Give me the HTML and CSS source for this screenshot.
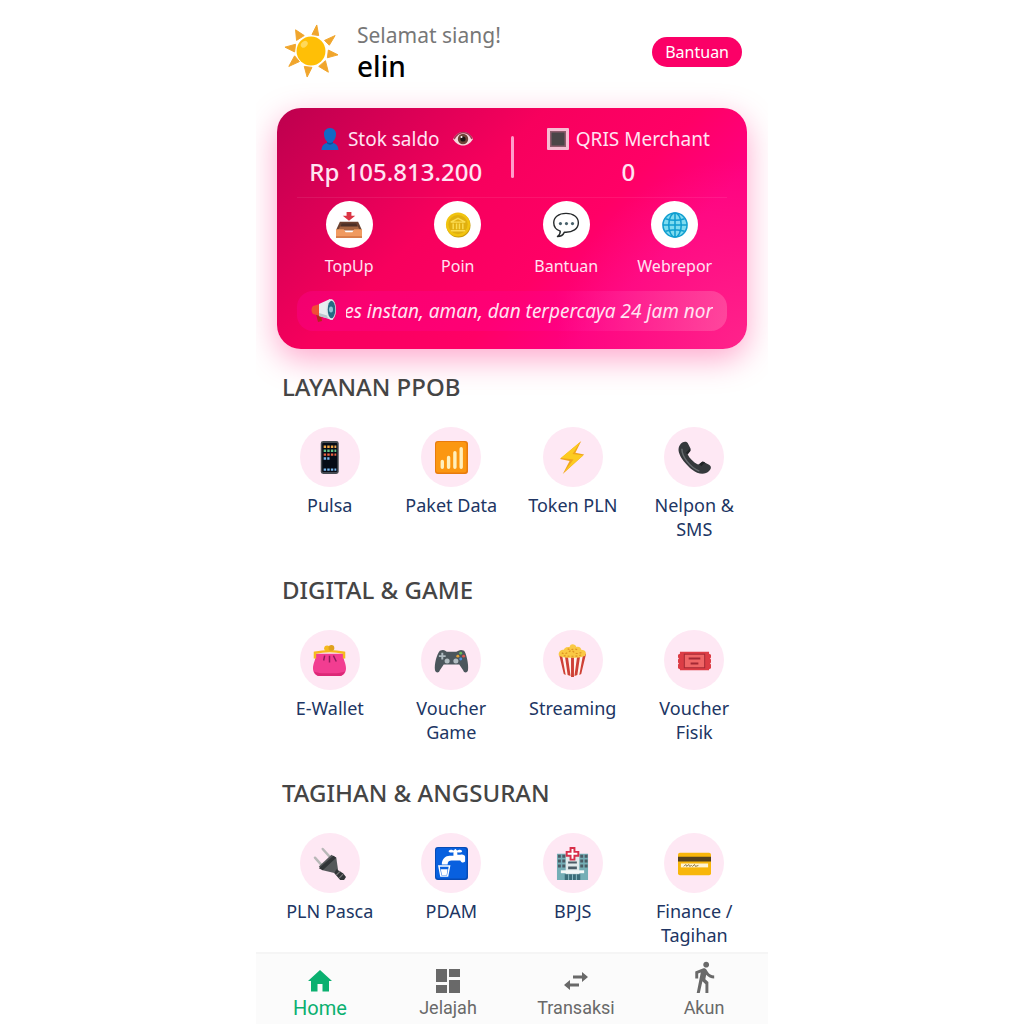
FILE: index.html
```html
<!DOCTYPE html>
<html lang="id">
<head>
<meta charset="UTF-8" />
<meta name="viewport" content="width=device-width, initial-scale=1" />
<title>Home</title>
<link rel="stylesheet" href="styles.css">
</head>
<body>
<div class="app">

<header class="top">
  <svg class="sun" viewBox="0 0 56 56" aria-hidden="true">
    <g fill="#f0a52c" stroke="#f0a52c" stroke-linejoin="round">
      <path d="M29 11 L34 1 L36 12 Z"/>
      <path d="M42 17 L53 12 L47 22 Z"/>
      <path d="M46 27 L56 32 L45 35 Z"/>
      <path d="M43 38 L46 50 L36 44 Z"/>
      <path d="M29 45 L24 55 L21 44 Z"/>
      <path d="M16 39 L5 44 L11 33 Z"/>
      <path d="M11 29 L1 24 L12 21 Z"/>
      <path d="M13 17 L12 6 L21 12 Z"/>
    </g>
    <circle cx="28" cy="28" r="15" fill="#ffbf06"/>
    <ellipse cx="21" cy="21" rx="4" ry="3" fill="#ffd95a" transform="rotate(-45 21 21)"/>
  </svg>
  <div class="greeting">
    <p class="hello">Selamat siang!</p>
    <h1>elin</h1>
  </div>
  <button class="help-btn">Bantuan</button>
</header>

<section class="card">
  <div class="balances">
    <div class="balance">
      <p class="balance-title">
        <svg class="mini" viewBox="0 0 22 22" aria-hidden="true"><path fill="#1269c4" d="M11 0c4 0 6.300 3 6 6.500c-.2 3.500-1.500 5.500-3 7v1.500c3 .8 5 2 5.500 7H2.500c.5-5 2.500-6.200 5.500-7v-1.500c-1.500-1.500-2.800-3.500-3-7C4.700 3 7 0 11 0z"/><path fill="#0b4f9c" d="M8 14c2 1.300 4 1.300 6 0v1.500c-2 1.500-4 1.500-6 0z"/></svg>
        Stok saldo
        <button class="eye" aria-label="Tampilkan saldo">
          <svg viewBox="0 0 20 16" aria-hidden="true"><path fill="#f7d9df" d="M0 8C4 2 7 1 10 1s7 1 10 7c-3 5-7 6.500-10 6.500S3 13 0 8z"/><path fill="none" stroke="#a33a55" stroke-width="1.500" d="M1 8C4 3 7 1.500 10 1.500S17 3 19 8"/><circle cx="10" cy="8" r="5.200" fill="#6f4438"/><circle cx="10" cy="8" r="2.600" fill="#1c1514"/><circle cx="8.500" cy="6" r="1" fill="#fff"/></svg>
        </button>
      </p>
      <p class="amount">Rp 105.813.200</p>
    </div>
    <span class="bar"></span>
    <div class="balance">
      <p class="balance-title">
        <svg class="mini" viewBox="0 0 22 22" aria-hidden="true"><rect width="22" height="22" rx="1" fill="#f6bcd2"/><rect x="3" y="3" width="16" height="16" fill="#8f5b6c"/><rect x="4.500" y="4.500" width="13" height="13" fill="#4b4548"/></svg>
        QRIS Merchant
      </p>
      <p class="amount">0</p>
    </div>
  </div>

  <nav class="actions">
    <a href="#topup"><span class="disc">
      <svg viewBox="0 0 27 27" aria-hidden="true"><path fill="#dc3545" d="M11 0h5v4h4l-6.500 5L7 4h4z"/><path fill="#6b4130" d="M4 10h19l4 9H0z"/><path fill="#a76540" d="M5 14h17l3 5H2z"/><path fill="#4d3027" d="M6 12h15l1.500 3h-18z"/><path fill="#f09a60" d="M0 18h8l2 3h7l2-3h8v8.500H0z"/><path fill="#d87e49" d="M0 25h27v2H0z"/></svg>
    </span>TopUp</a>
    <a href="#poin"><span class="disc">
      <svg viewBox="0 0 27 27" aria-hidden="true"><circle cx="14" cy="14" r="12.500" fill="#c99a08"/><circle cx="13.500" cy="13" r="12.500" fill="#f1c40f"/><circle cx="13.500" cy="13" r="10" fill="#e0b010"/><path fill="none" stroke="#fbdc51" stroke-width="1.500" d="M6 10.500l7.500-4 7.500 4zM8.500 12v6M12 12v6M15 12v6M18.500 12v6M6 19.500h15"/></svg>
    </span>Poin</a>
    <a href="#bantuan"><span class="disc">
      <svg viewBox="0 0 28 27" aria-hidden="true"><path fill="#fff" stroke="#25292b" stroke-width="1.500" stroke-linejoin="round" d="M14 1C6 1 .8 5 .8 11c0 4.500 3 7.700 7 9.200.2 2-.8 4-3 5.800 4 0 6.200-1.800 7.500-4.800 9 .6 15-3.800 15-10.200C27.300 5 22 1 14 1z"/><g fill="#48616b"><circle cx="8" cy="12" r="1.700"/><circle cx="14.500" cy="12" r="1.700"/><circle cx="21" cy="12" r="1.700"/></g></svg>
    </span>Bantuan</a>
    <a href="#webreport"><span class="disc">
      <svg viewBox="0 0 27 27" aria-hidden="true"><circle cx="13.500" cy="13.500" r="12.500" fill="#7fdcf0"/><g fill="none" stroke="#109fd0" stroke-width="1.600"><path d="M13.500 1v25M1 13.500h25M3.500 7c6 2 14 2 20 0M3.500 20c6-2 14-2 20 0"/><ellipse cx="13.500" cy="13.500" rx="6.500" ry="12.500"/><circle cx="13.500" cy="13.500" r="12.500"/></g></svg>
    </span>Webrepor</a>
  </nav>

  <div class="notice">
    <svg viewBox="0 0 26 24" aria-hidden="true"><path fill="#b5261e" d="M5 15l5 1 1 6-4 1z"/><path fill="#ef4d35" d="M2 7l7-2v12l-7-2c-2-2-2-6 0-8z"/><path fill="#e8edf0" d="M8 5l11-5 3 21-14-4z"/><path fill="#b9c6cc" d="M8 14l13 4 1 3-14-4z"/><ellipse cx="20" cy="10.500" rx="5" ry="10.500" fill="#dfe7ea"/><ellipse cx="20.500" cy="10.500" rx="3.800" ry="8.800" fill="#256b83"/><ellipse cx="20" cy="10.500" rx="2" ry="3" fill="#8dc4d5"/></svg>
    <p class="ticker"><span>es instan, aman, dan terpercaya 24 jam nor</span></p>
  </div>
</section>

<main>
  <section class="group">
    <h2>LAYANAN PPOB</h2>
    <div class="services">
      <a href="#pulsa"><span class="icon">
        <svg viewBox="0 0 34 34" aria-hidden="true"><rect x="8" width="18.500" height="34" rx="2.500" fill="#454a50"/><rect x="9.500" y="2" width="15.500" height="30" rx="1" fill="#060b16"/><path stroke="#f2a747" stroke-width="2.500" stroke-dasharray="2.500 1.200" d="M11 6h13"/><path stroke="#64c58c" stroke-width="2.500" stroke-dasharray="2.500 1.200" d="M11 10h13"/><path stroke="#ed6242" stroke-width="2.500" stroke-dasharray="2.500 1.200" d="M11 14h13"/><path stroke="#78b8ee" stroke-width="2.500" stroke-dasharray="2.500 1.200" d="M11 18h6M11 29.500h13"/></svg>
      </span>Pulsa</a>
      <a href="#paket-data"><span class="icon">
        <svg viewBox="0 0 34 34" aria-hidden="true"><rect width="34" height="34" rx="3" fill="#e87b0c"/><rect x="1" y="1" width="31.500" height="31.500" rx="3" fill="#fb9711"/><path stroke="#fff0bd" stroke-width="3.500" stroke-linecap="round" d="M7.500 21v6M14 17v10M20.500 12v15M27 8v19"/></svg>
      </span>Paket Data</a>
      <a href="#token-pln"><span class="icon">
        <svg viewBox="0 0 34 34" aria-hidden="true"><path fill="#f0a51c" d="M26 0L4 18.500l10 2L7 34l22-20-9-2z"/><path fill="#fdcb21" d="M25 1L5 17.500l13 1.500L8.500 32 28 15l-11-1.500z"/></svg>
      </span>Token PLN</a>
      <a href="#nelpon"><span class="icon">
        <svg viewBox="0 0 34 34" aria-hidden="true"><path fill="#35393c" d="M2 4C4 1 8-.5 10 2l3 6c.7 2-3 4-3 6 2 4 6 8 10 10 2 1 4-3 6-2.500l6 3c3 2 2 4.500 0 6.500-4 4-11 4-18-2C6 22-3 11 2 4z"/><path fill="none" stroke="#666b6e" stroke-width="1.500" d="M4 8c0 8 8 19 18 23"/><path fill="#202426" d="M8 12l4-4 1 2-3 4zM22 24l3-3 3 1-4 4z"/></svg>
      </span>Nelpon &amp; SMS</a>
    </div>
  </section>

  <section class="group">
    <h2>DIGITAL &amp; GAME</h2>
    <div class="services">
      <a href="#e-wallet"><span class="icon">
        <svg viewBox="0 0 34 34" aria-hidden="true"><path fill="#f23d91" d="M3 10h28c0 6 3 10 3 15 0 5-3 8-7 8H7c-4 0-7-3-7-8 0-5 3-9 3-15z"/><path fill="#dc2877" d="M1 28c3 3 28 3 32 0-1 3-3 5-6 5H7c-3 0-5-2-6-5z"/><path fill="none" stroke="#f5b91d" stroke-width="2.500" d="M2 15V9c9-2 21-2 30 0v6"/><circle cx="14.500" cy="4.500" r="3" fill="#f5b91d"/><circle cx="19" cy="4" r="3" fill="#dfa11c"/><path fill="none" stroke="#8e1d5b" stroke-width="1.500" d="M12 12l-1 5M17 12v7M21 12l3 6"/></svg>
      </span>E-Wallet</a>
      <a href="#voucher-game"><span class="icon">
        <svg viewBox="0 0 34 34" aria-hidden="true"><path fill="#4b565c" d="M5 7c4-2 6 0 7 1h10c2-1 4-3 8-1 2 2 5 14 4 20-1 3-4 3-5 0l-4-6H9l-4 6c-1 3-4 3-5 0C-1 21 2 10 5 7z"/><path stroke="#aebac0" stroke-width="2" d="M7.500 9v7M4 12.500h7"/><g fill="#b2bdc2"><circle cx="12.500" cy="17.500" r="2.600"/><circle cx="21.500" cy="17.500" r="2.600"/></g><circle cx="26.500" cy="9.500" r="1.500" fill="#67b858"/><circle cx="29.500" cy="12.500" r="1.500" fill="#dc554b"/><circle cx="23.500" cy="12.500" r="1.500" fill="#e1a33c"/><circle cx="26.500" cy="15.500" r="1.500" fill="#4a91df"/></svg>
      </span>Voucher Game</a>
      <a href="#streaming"><span class="icon">
        <svg viewBox="0 0 34 34" aria-hidden="true"><path fill="#fff2ed" d="M3 10h28l-5 21-9 3-9-3z"/><path fill="#ce4036" d="M3 10h3l4 22-2-1zM9 11h3l3 22-3-1zM15.500 12h3v22h-3zM22 11h3l-3 21-3 1zM28 10h3l-5 21-2 1z"/><path fill="#fac944" d="M3 12c-1-4 2-6 5-6 1-3 4-3 6-3 1-4 6-3 7 0 3-1 5 1 5 3 4 0 6 3 4 6-6 3-21 3-27 0z"/><path fill="none" stroke="#de9422" stroke-width="1.200" stroke-dasharray="2 2" d="M6 9c5 4 8-5 12-1s6 0 10 1M12 5c3 2 7-1 10 1M8 12c5 1 13 1 19-1"/></svg>
      </span>Streaming</a>
      <a href="#voucher-fisik"><span class="icon">
        <svg viewBox="0 0 34 34" aria-hidden="true"><path fill="#dc3d45" d="M2 8h30v2l2 1v3l-1 1 1 1v3l-1 1 1 1v4l-2 1v1H2v-1l-2-1v-4l1-1-1-1v-3l1-1-1-1v-3l2-1z"/><rect x="6.500" y="10.500" width="21" height="14" fill="#ef6666" stroke="#a32934"/><path stroke="#a32934" stroke-width="2" d="M11 15h12M13 20h8"/></svg>
      </span>Voucher Fisik</a>
    </div>
  </section>

  <section class="group">
    <h2>TAGIHAN &amp; ANGSURAN</h2>
    <div class="services">
      <a href="#pln-pasca"><span class="icon">
        <svg viewBox="0 0 34 34" aria-hidden="true"><path stroke="#b8b8b8" stroke-width="2.500" stroke-linecap="round" d="M2 11l8 9M10 2l8 9"/><path fill="#55585a" d="M6 20L19 8l5 3 2 14-3 2-13-3z"/><path fill="#313537" d="M8 20L21 9l3 2-14 13-4-2zM24 23l7 4 3 4-2 3h-4l-6-7z"/><path stroke="#777" stroke-width="1.200" d="M24 29l4-4M27 32l4-4"/></svg>
      </span>PLN Pasca</a>
      <a href="#pdam"><span class="icon">
        <svg viewBox="0 0 34 34" aria-hidden="true"><rect width="34" height="34" rx="3" fill="#074bb5"/><rect x="1" y="1" width="31.500" height="31.500" rx="3" fill="#0860df"/><path fill="#fff" d="M14 4c2-2 4-.5 5-.5s1-1.500 2-1.500 1 1.500 2 1.500 3-1.500 5 .5c0 2-3 2-5 1.500V8h3c2-1 5 0 5 2v5c-2 2-4 1-5-1h-9c-2 0-4 1-4 4H7c0-6 4-9 8-9h4V5.500c-2 .5-5 .5-5-1.500z"/><path fill="none" stroke="#fff" stroke-width="1.500" d="M4 19.500l2 10.500h7l2-10.500z"/><path fill="#fff" d="M6 23h7l-1 6H7z"/></svg>
      </span>PDAM</a>
      <a href="#bpjs"><span class="icon">
        <svg viewBox="0 0 34 34" aria-hidden="true"><path fill="#75aeb6" d="M1 7h32v27H1z"/><path fill="#e1eaeb" d="M10 7h14v23H10z"/><path fill="#4b5b65" d="M2 8h3v3H2zM6.500 8h3v3h-3zM2 13h3v3H2zM6.500 13h3v3h-3zM2 18h3v3H2zM6.500 18h3v3h-3zM25 8h3v3h-3zM29.500 8h3v3h-3zM25 13h3v3h-3zM29.500 13h3v3h-3zM25 18h3v3h-3zM29.500 18h3v3h-3zM12.500 15h9v2h-9zM12.500 20h9v3h-9z"/><path fill="#f4f8f8" d="M5 24h24v3H5z"/><path fill="#3b6d79" d="M9 28h16v6H9z"/><path stroke="#8cbec6" d="M13 28v6M17 28v6M21 28v6"/><path fill="#fff" stroke="#d82f4a" stroke-width="2" d="M15 1h4v4h4v4h-4v4h-4V9h-4V5h4z"/></svg>
      </span>BPJS</a>
      <a href="#finance"><span class="icon">
        <svg viewBox="0 0 34 34" aria-hidden="true"><rect y="6" width="34" height="23" rx="2" fill="#f8b60b"/><path fill="#52401f" d="M0 10h34v5H0z"/><path fill="#fff5d4" d="M3 17h28v4H3z"/><path fill="none" stroke="#8a7540" stroke-width="1" d="M6 20l2-2 1 2 2-2 1 2 2-1 1 1 2-2 1 2 3-1"/></svg>
      </span>Finance / Tagihan</a>
    </div>
  </section>
</main>

<nav class="tabs">
  <a class="active" href="#home">
    <svg viewBox="0 0 24 24" aria-hidden="true"><path fill="currentColor" d="M12 1L0 12h3v10.500h6.500V15h5v7.500H21V12h3z"/></svg>
    Home</a>
  <a href="#jelajah">
    <svg viewBox="0 0 24 24" aria-hidden="true"><path fill="currentColor" d="M0 0h11v13H0zM13 0h11v8H13zM0 16h11v8H0zM13 11h11v13H13z"/></svg>
    Jelajah</a>
  <a href="#transaksi">
    <svg viewBox="0 0 24 24" aria-hidden="true"><path fill="currentColor" d="M18 3l6 5-6 5V9.500H9v-3h9zM6 11l-6 5 6 5v-3.500h9v-3H6z"/></svg>
    Transaksi</a>
  <a href="#akun">
    <svg class="walk" viewBox="4 1 16 22" aria-hidden="true"><path fill="currentColor" d="M13.500 5.500c1.100 0 2-.9 2-2s-.9-2-2-2-2 .9-2 2 .9 2 2 2zM9.800 8.900L7 23h2.100l1.800-8 2.100 2v6h2v-7.500l-2.100-2 .6-3C14.800 12 16.800 13 19 13v-2c-1.900 0-3.500-1-4.300-2.400l-1-1.600c-.4-.6-1-1-1.700-1-.3 0-.5.1-.8.1L6 8.300V13h2V9.600l1.800-.7"/></svg>
    Akun</a>
</nav>

</div>
</body>
</html>
```
FILE: styles.css
```css
* {
  box-sizing: border-box;
}
body {
  margin: 0;
  background: #fff;
  color: #203563;
  font-family: "Noto Sans", "Open Sans", sans-serif;
}
h1, h2, p {
  margin: 0;
  font-weight: 400;
}
a {
  color: inherit;
  text-decoration: none;
}
button {
  border: none;
  font: inherit;
  cursor: pointer;
}
svg {
  display: block;
  flex: none;
  overflow: visible;
}
.app {
  display: flex;
  flex-direction: column;
  max-width: 512px;
  min-height: 100vh;
  margin: 0 auto;
  overflow: hidden;
}

/* greeting */
.top {
  display: flex;
  align-items: center;
  gap: 19px;
  padding: 20px 26px 26px 28px;
}
.sun {
  width: 54px;
  height: 54px;
}
.greeting {
  flex: 1;
}
.hello {
  color: #777;
  font-size: 21px;
  line-height: 30px;
}
h1 {
  color: #000;
  font-size: 28px;
  font-weight: 500;
  line-height: 32px;
}
.help-btn {
  margin-top: 2px;
  padding: 0 13px;
  border-radius: 15px;
  background: #fb0067;
  color: #fff;
  font-size: 16px;
  line-height: 30px;
}

/* balance card */
.card {
  margin: 0 21px;
  padding: 16px 20px 18px;
  border-radius: 24px;
  background:
    radial-gradient(circle at 100% 100%, rgba(255, 70, 150, 0.5), transparent 36%),
    linear-gradient(135deg, #bd004e 0%, #f7005d 38%, #ff0066 60%, #ff0080 75%, #ff0080 100%);
  box-shadow: 0 10px 32px rgba(255, 0, 110, 0.35);
  color: #ffe3f2;
}
.balances {
  display: flex;
  align-items: center;
  gap: 16px;
  padding-bottom: 8px;
  border-bottom: 1px solid rgba(255, 255, 255, 0.08);
}
.balance {
  flex: 1;
  text-align: center;
}
.balance-title {
  display: flex;
  align-items: center;
  justify-content: center;
  gap: 7px;
  font-size: 19px;
  line-height: 30px;
}
.mini {
  width: 22px;
  height: 22px;
}
.eye {
  margin-left: 6px;
  padding: 0;
  background: none;
}
.eye svg {
  width: 20px;
  height: 16px;
}
.amount {
  font-size: 24px;
  font-weight: 500;
  line-height: 35px;
}
.bar {
  width: 3px;
  height: 42px;
  border-radius: 2px;
  background: #ff9cca;
}
.actions {
  display: grid;
  grid-template-columns: repeat(4, 1fr);
  margin: 3px -2px 0;
}
.actions a {
  display: flex;
  flex-direction: column;
  align-items: center;
  gap: 6px;
  font-size: 16px;
  line-height: 24px;
}
.disc {
  display: grid;
  place-items: center;
  width: 47px;
  height: 47px;
  border-radius: 50%;
  background: #fff;
}
.disc svg {
  width: 26px;
  height: 26px;
}
.notice {
  display: flex;
  align-items: center;
  gap: 9px;
  height: 40px;
  margin-top: 13px;
  padding: 0 14px;
  border-radius: 16px;
  background: linear-gradient(90deg, rgba(255, 0, 150, 0.35), rgba(255, 0, 150, 0.3) 60%, rgba(255, 130, 185, 0.4));
}
.notice svg {
  width: 26px;
  height: 24px;
}
.ticker {
  display: flex;
  flex: 1;
  justify-content: flex-end;
  overflow: hidden;
  font-size: 19px;
  font-style: italic;
  line-height: 30px;
  white-space: nowrap;
}

/* services */
main {
  flex: 1;
  padding: 21px 13px 0;
}
.group + .group {
  margin-top: 31px;
}
h2 {
  padding-left: 13px;
  color: #454545;
  font-size: 24px;
  font-weight: 500;
  line-height: 34px;
}
.services {
  display: grid;
  grid-template-columns: repeat(4, 1fr);
  margin-top: 23px;
}
.services a {
  display: flex;
  flex-direction: column;
  align-items: center;
  gap: 6px;
  min-height: 115px;
  padding: 0 12px;
  font-size: 18px;
  line-height: 24px;
  text-align: center;
}
.icon {
  display: grid;
  place-items: center;
  width: 60px;
  height: 60px;
  border-radius: 50%;
  background: #fee8f4;
}
.icon svg {
  width: 33px;
  height: 33px;
}

/* bottom tabs */
.tabs {
  display: grid;
  grid-template-columns: repeat(4, 1fr);
  height: 72px;
  border-top: 2px solid #f5f5f5;
  background: #fbfbfb;
}
.tabs a {
  display: flex;
  flex-direction: column;
  align-items: center;
  justify-content: flex-end;
  gap: 3px;
  padding-bottom: 4px;
  color: #696969;
  font: 18px/24px Roboto, sans-serif;
}
.tabs .active {
  color: #0bb070;
  font-size: 20px;
}
.tabs svg {
  width: 24px;
  height: 24px;
}
.tabs .walk {
  width: 24px;
  height: 32px;
}
```
